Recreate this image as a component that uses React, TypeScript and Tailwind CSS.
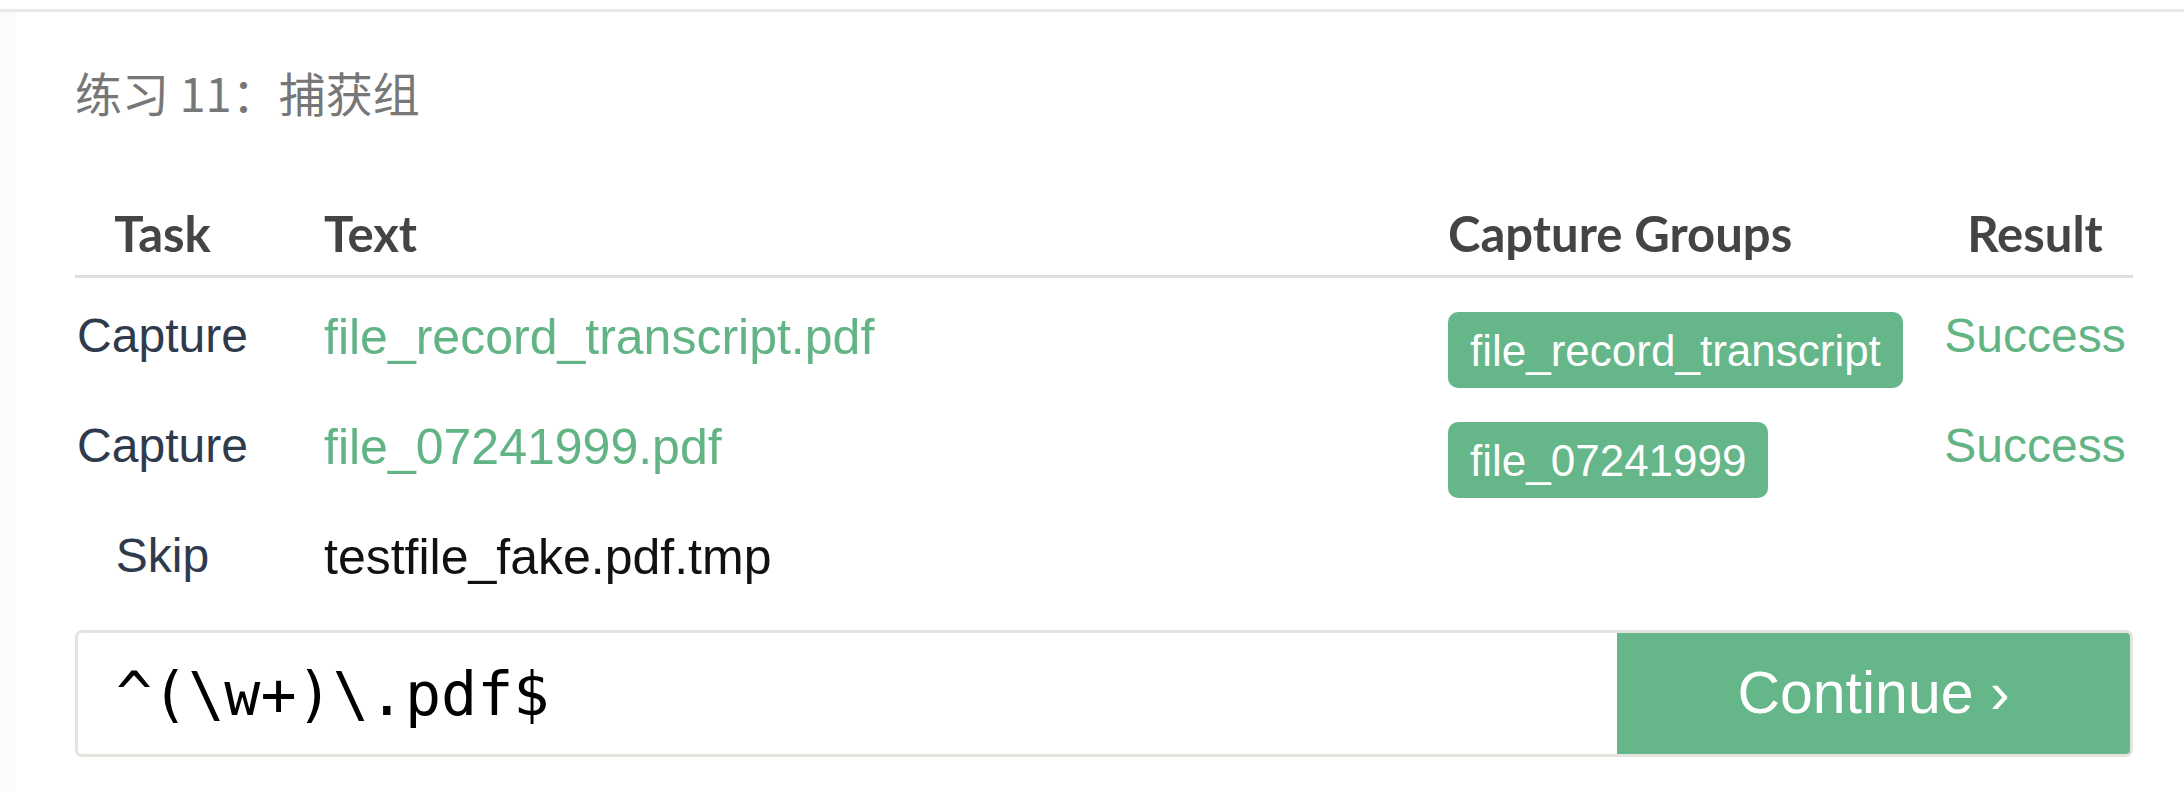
import React from "react";

type Row = {
  task: string;
  text: string;
  groups: string[];
  result: string;
  skip?: boolean;
};

const rows: Row[] = [
  {
    task: "Capture",
    text: "file_record_transcript.pdf",
    groups: ["file_record_transcript"],
    result: "Success",
  },
  {
    task: "Capture",
    text: "file_07241999.pdf",
    groups: ["file_07241999"],
    result: "Success",
  },
  { task: "Skip", text: "testfile_fake.pdf.tmp", groups: [], result: "", skip: true },
];

const sans = "font-['Liberation_Sans','Helvetica_Neue',Arial,sans-serif]";

const App = () => {
  return (
    <div className="min-h-[792px] w-full bg-white pt-[9px]">
      <div className="border-t-[3px] border-[#e9e9ed] flex">
        <div className="w-[16px] shrink-0 bg-[#fbfbfb]" />
        <div className="flex-1 pl-[59px] pr-[51px] pb-[36px]">
          <h1 className="mt-[56px] text-[47px] leading-none text-[#777777] font-['Noto_Sans_CJK_SC','Noto_Sans',sans-serif] font-normal">
            练习 11：捕获组
          </h1>

          <div className="mt-[94px]">
            <div className="grid grid-cols-[175px_1198px_489px_1fr] border-b-[3px] border-[#dedede] pb-[17px] text-[49px] leading-none font-bold text-[#444444] font-['Lato','Open_Sans',sans-serif]">
              <div className="text-center">Task</div>
              <div className="pl-[74px]">Text</div>
              <div>Capture Groups</div>
              <div className="text-center">Result</div>
            </div>

            {rows.map((row, i) => (
              <div
                key={i}
                className={`grid grid-cols-[175px_1198px_489px_1fr] items-start pt-[34px] text-[48px] leading-none ${sans}`}
              >
                <div className="text-center text-[#2f3b4d]">{row.task}</div>
                <div
                  className={`pl-[74px] text-[50px] ${row.skip ? "text-[#111111]" : "text-[#62b485]"}`}
                >
                  {row.text}
                </div>
                <div className="flex gap-3">
                  {row.groups.map((g) => (
                    <span
                      key={g}
                      className="h-[76px] rounded-[10px] bg-[#65b688] px-[22px] text-[44px] leading-[78px] text-white"
                    >
                      {g}
                    </span>
                  ))}
                </div>
                <div className="text-center text-[#62b485]">{row.result}</div>
              </div>
            ))}
          </div>

          <div className="mt-[48px] flex h-[127px] rounded-[7px] border-[3px] border-[#e5e5df] overflow-hidden">
            <div className="flex flex-1 items-center pl-[38px] font-['DejaVu_Sans_Mono','Liberation_Mono',monospace] text-[60px] text-black">
              ^(\w+)\.pdf$
            </div>
            <button className={`w-[513px] bg-[#65b688] text-[59px] text-white ${sans}`}>
              Continue ›
            </button>
          </div>
        </div>
      </div>
    </div>
  );
};

export default App;
